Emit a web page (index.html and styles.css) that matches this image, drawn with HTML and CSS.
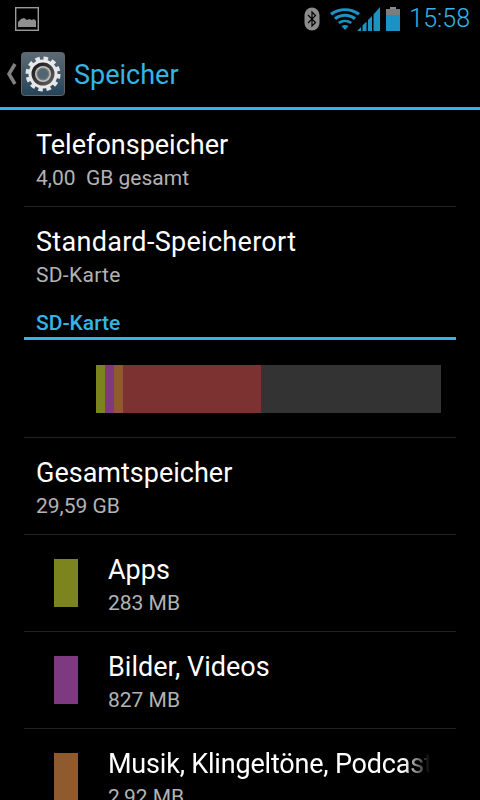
FILE: index.html
```html
<!DOCTYPE html>
<html>
<head>
  <meta charset="UTF-8" />
  <title>Speicher</title>
  <link rel="stylesheet" href="styles.css">
</head>
<body>
  <div class="status-bar">
    <svg class="pic-icon" width="24" height="24" viewBox="0 0 24 24">
      <rect x="0.700" y="0.700" width="22.600" height="22.600" fill="none" stroke="#9a9a9a" stroke-width="1.400"/>
      <path d="M3 20V15L6 12 9 11 12 13 14 12 17 13 19 12 21 14 21 20Z" fill="#8f8f8f"/>
    </svg>
    <div class="status-right">
      <svg class="bt-icon" width="16" height="24" viewBox="0 0 16 24">
        <rect x="0.500" y="0.500" width="15" height="23" rx="7.500" fill="#8c8c8c"/>
        <path d="M4 8L11.500 15.500 8 19V5L11.500 8.500 4 16" fill="none" stroke="#000" stroke-width="1.200"/>
      </svg>
      <svg class="wifi-icon" width="30" height="22" viewBox="0 0 30 22">
        <path d="M0 5C8-1.500 22-1.500 30 5L28 7.500C20 1.500 10 1.500 2 7.500Z" fill="#1a93c4"/>
        <path d="M4 9.500C10.500 4.500 19.500 4.500 26 9.500L24 12C18 7.800 12 7.800 6 12Z" fill="#1a93c4"/>
        <path d="M8 14C12 11 18 11 22 14L20.500 16C17 13.800 13 13.800 9.500 16Z" fill="#1a93c4"/>
        <path d="M11.500 18C13.500 16.800 16.500 16.800 18.500 18L15 22Z" fill="#1a93c4"/>
      </svg>
      <svg class="signal-icon" width="23" height="24" viewBox="0 0 23 24">
        <path d="M0 24L4 20V24ZM5.500 24V18.500L9.500 14.500V24ZM11 24V13L15 9V24ZM16.500 24V7.500L23 0V24Z" fill="#1a93c4"/>
      </svg>
      <svg class="battery-icon" width="14" height="24" viewBox="0 0 14 24">
        <rect x="4" y="0" width="6" height="3" fill="#8c8c8c"/>
        <rect x="0" y="2" width="14" height="6" fill="#7d7d7d"/>
        <rect x="0" y="8" width="14" height="16" fill="#1a93c4"/>
      </svg>
      <span class="clock">15:58</span>
    </div>
  </div>

  <div class="action-bar">
    <svg class="back-icon" width="12" height="22" viewBox="0 0 12 22">
      <path d="M9 1L3 11 9 21" fill="none" stroke="#808080" stroke-width="3.500"/>
    </svg>
    <svg class="gear-icon" width="44" height="44" viewBox="0 0 44 44">
      <defs>
        <linearGradient id="tile" x1="0" y1="0" x2="0" y2="1">
          <stop offset="0" stop-color="#5d6a74"/>
          <stop offset="1" stop-color="#24445a"/>
        </linearGradient>
        <linearGradient id="ring" x1="0" y1="0" x2="1" y2="1">
          <stop offset="0" stop-color="#111"/>
          <stop offset="1" stop-color="#666"/>
        </linearGradient>
      </defs>
      <rect x="0.500" y="0.500" width="43" height="43" rx="3" fill="url(#tile)" stroke="#666"/>
      <circle cx="22" cy="22" r="15.500" fill="none" stroke="#e6e6e6" stroke-width="4" stroke-dasharray="4.500 3.620"/>
      <circle cx="22" cy="22" r="14.500" fill="#e8e8e8"/>
      <circle cx="22" cy="22" r="11.500" fill="url(#ring)"/>
      <circle cx="22" cy="22" r="8" fill="#c4c4c4"/>
      <circle cx="22" cy="22" r="6.500" fill="#777"/>
      <circle cx="22" cy="22" r="5" fill="#4f6674"/>
    </svg>
    <span class="action-title">Speicher</span>
  </div>

  <div class="content">
    <div class="pref-row">
      <div class="pref-title">Telefonspeicher</div>
      <div class="pref-sub">4,00&nbsp; GB gesamt</div>
    </div>
    <div class="pref-row no-line">
      <div class="pref-title wide">Standard-Speicherort</div>
      <div class="pref-sub wide">SD-Karte</div>
    </div>

    <div class="category">SD-Karte</div>

    <div class="usage-row">
      <div class="usage-bar">
        <div class="seg apps" style="width: 9px"></div>
        <div class="seg pics" style="width: 9px"></div>
        <div class="seg music" style="width: 9px"></div>
        <div class="seg misc" style="width: 138px"></div>
        <div class="seg free" style="width: 180px"></div>
      </div>
    </div>

    <div class="pref-row">
      <div class="pref-title">Gesamtspeicher</div>
      <div class="pref-sub">29,59 GB</div>
    </div>
    <div class="pref-row with-swatch">
      <div class="swatch apps"></div>
      <div class="pref-text">
        <div class="pref-title">Apps</div>
        <div class="pref-sub">283 MB</div>
      </div>
    </div>
    <div class="pref-row with-swatch">
      <div class="swatch pics"></div>
      <div class="pref-text">
        <div class="pref-title">Bilder, Videos</div>
        <div class="pref-sub">827 MB</div>
      </div>
    </div>
    <div class="pref-row with-swatch">
      <div class="swatch music"></div>
      <div class="pref-text">
        <div class="pref-title fade">Musik, Klingeltöne, Podcasts</div>
        <div class="pref-sub">2,92 MB</div>
      </div>
    </div>
  </div>
</body>
</html>
```

FILE: styles.css
```css
body {
  margin: 0;
  height: 800px;
  overflow: hidden;
  background: #000;
  color: #fff;
  font-family: Roboto, sans-serif;
}
.status-bar {
  display: flex;
  align-items: center;
  justify-content: space-between;
  height: 38px;
  padding: 0 10px 0 15px;
}
.status-right {
  display: flex;
  align-items: center;
}
.bt-icon {
  margin-right: 10px;
}
.signal-icon {
  margin-left: -3px;
  margin-right: 6px;
}
.battery-icon {
  margin-right: 9px;
}
.clock {
  color: #33b5e5;
  font-size: 25px;
  line-height: 38px;
  font-weight: 300;
}
.action-bar {
  display: flex;
  align-items: center;
  height: 67px;
  padding-top: 2px;
  border-bottom: 3px solid #33b5e5;
}
.back-icon {
  margin-left: 6px;
  margin-right: 3px;
}
.action-title {
  margin-top: 2px;
  margin-left: 9px;
  color: #33b5e5;
  font-size: 27px;
}
.content {
  padding: 0 24px;
}
.pref-row {
  height: 96px;
  padding: 0 12px;
  border-bottom: 1px solid #222;
}
.pref-row.no-line {
  border-bottom: none;
}
.pref-title {
  padding-top: 20px;
  font-size: 27px;
  line-height: 30px;
}
.pref-sub {
  margin-top: 6px;
  color: #b3b3b3;
  font-size: 21px;
  line-height: 24px;
}
.wide {
  letter-spacing: 0.3px;
}
.with-swatch {
  display: flex;
  padding-left: 30px;
}
.swatch {
  width: 24px;
  height: 48px;
  margin-top: 24px;
  margin-right: 30px;
}
.pref-text {
  flex: 1;
  min-width: 0;
}
.fade {
  width: 322px;
  letter-spacing: -0.2px;
  white-space: nowrap;
  overflow: hidden;
  -webkit-mask-image: linear-gradient(to right, #000 92%, transparent 100%);
  mask-image: linear-gradient(to right, #000 92%, transparent 100%);
}
.category {
  height: 34px;
  padding-left: 12px;
  border-bottom: 3px solid #33b5e5;
  color: #33b5e5;
  font-size: 21px;
  font-weight: 500;
  line-height: 40px;
}
.usage-row {
  height: 72px;
  padding: 25px 15px 0 72px;
  border-bottom: 1px solid #222;
}
.usage-bar {
  display: flex;
  height: 48px;
}
.apps {
  background: #7c851d;
}
.pics {
  background: #7d3a80;
}
.music {
  background: #8f5a2d;
}
.misc {
  background: #7d3232;
}
.free {
  background: #333;
}
```
